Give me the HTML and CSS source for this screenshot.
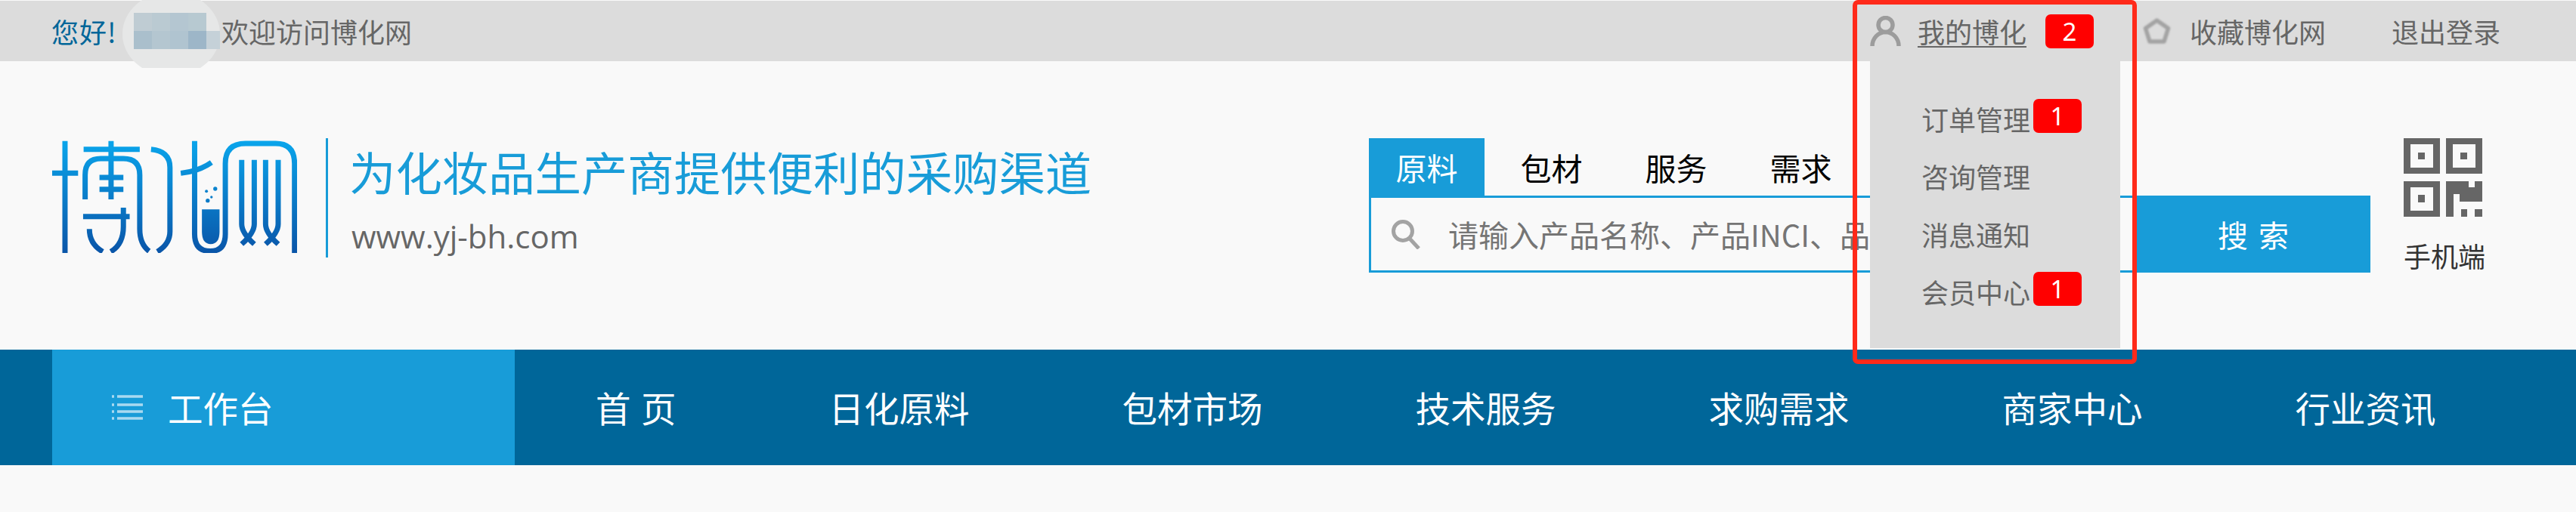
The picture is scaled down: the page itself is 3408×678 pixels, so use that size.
FILE: index.html
```html
<!DOCTYPE html>
<html lang="zh-CN">
<head>
<meta charset="utf-8">
<title>博化网</title>
<link rel="stylesheet" href="styles.css">
</head>
<body>
<div class="page">
  <header class="topbar">
    <div class="welcome">
      <span class="greet">您好!</span>
      <span class="name">
        <span class="haze"></span>
        <span class="mosaic"><i></i><i></i><i></i><i></i><i></i><i></i><i></i><i></i><i></i><i></i></span>
      </span>
      <span>欢迎访问博化网</span>
    </div>
    <div class="account">
      <div class="mine">
        <svg class="icon-user" viewBox="0 0 41 40" aria-hidden="true">
          <circle cx="20.5" cy="12" r="9.500"/>
          <path d="M3 40a17.500 18.500 0 0 1 35 0"/>
        </svg>
        <a class="mine-link">我的博化</a>
        <span class="badge badge-top">2</span>
        <ul class="dropdown">
          <li>订单管理<span class="badge">1</span></li>
          <li>咨询管理</li>
          <li>消息通知</li>
          <li>会员中心<span class="badge">1</span></li>
        </ul>
      </div>
      <svg class="icon-star" viewBox="0 0 37 36" aria-hidden="true">
        <path d="M18.500 4 33.500 14.500 28 32H9L3.500 14.500Z"/>
      </svg>
      <span class="fav">收藏博化网</span>
      <span class="logout">退出登录</span>
    </div>
  </header>

  <section class="masthead">
    <div class="brand">
      <svg class="logo" viewBox="57 75 973 450" aria-label="博化" role="img">
        <defs>
          <linearGradient id="lg" gradientUnits="userSpaceOnUse" x1="0" y1="75" x2="0" y2="525">
            <stop offset="0" stop-color="#0aa6ec"/>
            <stop offset="1" stop-color="#0a55a8"/>
          </linearGradient>
        </defs>
        <g class="logo-lines">
          <path d="M108 80V525"/>
          <path d="M57 208H160"/>
          <path d="M182 113H405"/>
          <path d="M291 80V312"/>
          <path d="M188 312V215Q188 150 250 150H340Q405 150 405 215V430Q405 490 442 518"/>
          <path d="M245 225H340M245 272H340"/>
          <path d="M180 380H365"/>
          <path d="M340 345V420Q340 490 290 520"/>
          <path d="M205 430Q205 490 258 520"/>
          <path d="M450 113Q525 120 525 185V440Q525 490 475 520"/>
          <path d="M623 80V450Q623 518 685 518Q745 518 745 450V170Q745 90 825 90H945Q1020 90 1020 170V525"/>
          <path d="M568 208Q640 200 690 165"/>
          <path d="M810 155V410Q810 445 860 490M860 155V410Q860 445 810 490"/>
          <path d="M905 155V410Q905 445 955 490M955 155V410Q955 445 905 490"/>
        </g>
        <g class="logo-fill">
          <path d="M652 352H722V440Q722 490 687 490Q652 490 652 440Z"/>
          <circle cx="705" cy="270" r="8"/>
          <circle cx="670" cy="280" r="6"/>
          <circle cx="690" cy="303" r="5"/>
          <circle cx="675" cy="317" r="8"/>
        </g>
      </svg>
      <div class="brand-text">
        <div class="slogan">为化妆品生产商提供便利的采购渠道</div>
        <div class="url">www.yj-bh.com</div>
      </div>
    </div>
    <div class="search">
      <div class="tabs">
        <span class="tab tab-active">原料</span>
        <span class="tab">包材</span>
        <span class="tab">服务</span>
        <span class="tab">需求</span>
      </div>
      <div class="search-box">
        <div class="field">
          <svg class="icon-search" viewBox="0 0 42 40" aria-hidden="true">
            <circle cx="17" cy="16" r="12.500"/>
            <path d="M26 26 38 39"/>
          </svg>
          <span class="placeholder">请输入产品名称、产品INCI、品</span>
        </div>
        <button class="submit">搜 索</button>
      </div>
    </div>
    <div class="mobile">
      <svg class="icon-qr" viewBox="0 0 105 104" aria-hidden="true">
        <path fill-rule="evenodd" d="M0 0H48V47H0ZM9 8V39H39V8ZM19 19H28V28H19Z"/>
        <path fill-rule="evenodd" d="M56 0H104V47H56ZM65 8V39H95V8ZM75 19H84V28H75Z"/>
        <path fill-rule="evenodd" d="M0 57H48V104H0ZM9 65V96H39V65ZM19 75H28V85H19Z"/>
        <path d="M56 57H86V65H94V57H104V84H74V74H66V104H56Z"/>
        <path d="M76 94H84V104H76ZM94 94H104V104H94Z"/>
      </svg>
      <span>手机端</span>
    </div>
  </section>

  <nav class="nav">
    <div class="workbench">
      <svg class="icon-menu" viewBox="0 0 41 33" aria-hidden="true">
        <path d="M0 2H3M7 2H41M0 13H3M7 13H41M0 22H3M7 22H41M0 31H3M7 31H41"/>
      </svg>
      <span>工作台</span>
    </div>
    <ul class="nav-items">
      <li class="nav-home">首 页</li>
      <li>日化原料</li>
      <li>包材市场</li>
      <li>技术服务</li>
      <li>求购需求</li>
      <li>商家中心</li>
      <li>行业资讯</li>
    </ul>
  </nav>

  <div class="annotation"></div>
</div>
</body>
</html>
```
FILE: styles.css
```css
* { box-sizing: border-box; }

html, body {
  margin: 0;
  height: 678px;
  overflow: hidden;
}

body {
  background: #f9f9f9;
  color: #666;
  font-family: "Noto Sans CJK SC", "Noto Sans", sans-serif;
}

ul { margin: 0; padding: 0; list-style: none; }

.page {
  position: relative;
  padding-top: 1px;
  height: 678px;
}

/* top bar */
.topbar {
  display: flex;
  align-items: center;
  height: 80px;
  padding: 0 100px 0 68px;
  background: #dcdcdc;
  font-size: 36px;
  line-height: 1;
}

.welcome { display: flex; align-items: center; }

.greet { width: 94px; color: #006699; letter-spacing: 1px; white-space: nowrap; }

.name {
  position: relative;
  width: 131px;
  height: 80px;
}

.haze {
  position: absolute;
  left: 0;
  top: -12px;
  width: 129px;
  height: 112px;
  background: #e6e7e7;
  border-radius: 50%;
  clip-path: inset(11px 0 11px 0);
  z-index: 3;
}

.mosaic {
  position: absolute;
  left: 15px;
  top: 16px;
  display: grid;
  grid-template-columns: repeat(4, 24px) 18px;
  grid-auto-rows: 24px;
  z-index: 4;
}

.mosaic i:nth-child(1) { background: #bfccd3; }
.mosaic i:nth-child(2) { background: #bacad2; }
.mosaic i:nth-child(3) { background: #b4c6d1; }
.mosaic i:nth-child(4) { background: #b7c9d1; }
.mosaic i:nth-child(6) { background: #aabfcc; }
.mosaic i:nth-child(7) { background: #b4c6d0; }
.mosaic i:nth-child(8) { background: #b0c4d0; }
.mosaic i:nth-child(9) { background: #9db6c8; }
.mosaic i:nth-child(10) { background: #c5d1d8; }

.account {
  display: flex;
  align-items: center;
  margin-left: auto;
}

.mine {
  position: relative;
  display: flex;
  align-items: center;
  height: 80px;
}

.icon-user {
  width: 41px;
  height: 40px;
  margin: 0 22px 1px 0;
  fill: none;
  stroke: #9c9c9c;
  stroke-width: 5.5;
  filter: blur(.6px);
}

.mine-link {
  color: #666;
  text-decoration: underline;
  text-underline-offset: 4px;
  text-decoration-thickness: 2px;
}

.badge {
  display: flex;
  align-items: center;
  justify-content: center;
  width: 64px;
  height: 45px;
  margin: 0 0 7px 4px;
  border-radius: 7px;
  background: #f00;
  color: #fff;
  font-family: "Noto Sans", sans-serif;
  font-size: 33px;
  line-height: 1;
}

.badge-top { margin: 0 0 -8px 25px; transform: translateY(-4px); }

.dropdown {
  position: absolute;
  left: 0;
  top: 80px;
  width: 331px;
  height: 380px;
  padding: 38px 0 0 68px;
  background: #dcdcdc;
  z-index: 5;
}

.dropdown li {
  display: flex;
  align-items: center;
  height: 76.3px;
  white-space: nowrap;
}

.icon-star {
  width: 37px;
  height: 36px;
  margin: 0 25px 0 65px;
  fill: none;
  stroke: #a3a3a3;
  stroke-width: 5.5;
  stroke-linejoin: round;
  filter: blur(.8px);
}

.fav { white-space: nowrap; }

.logout { margin-left: 87px; white-space: nowrap; }

/* masthead */
.masthead {
  display: flex;
  align-items: flex-start;
  height: 382px;
  padding: 102px 0 0 69px;
}

.brand {
  display: flex;
  flex: 0 0 1742px;
}

.logo {
  flex: none;
  width: 324px;
  height: 150px;
  margin: 2px 38px 0 0;
  filter: blur(.5px);
}

.logo-lines {
  fill: none;
  stroke: url(#lg);
  stroke-width: 21;
}

.logo-fill { fill: url(#lg); }

.brand-text {
  height: 158px;
  padding-left: 28px;
  border-left: 3px solid #189cd8;
}

.slogan {
  color: #189cd8;
  font-size: 61.4px;
  line-height: 88px;
  white-space: nowrap;
}

.url {
  margin: 4px 0 0 3px;
  font-family: "Open Sans", "Noto Sans", sans-serif;
  font-size: 42px;
  line-height: 76px;
}

.search { flex: 0 0 1325px; }

.tabs {
  display: flex;
  gap: 12px;
  height: 76px;
}

.tab {
  display: flex;
  align-items: center;
  justify-content: center;
  width: 153px;
  color: #000;
  font-size: 41px;
  line-height: 1;
}

.tab-active { background: #189cd8; color: #fff; }

.search-box {
  display: flex;
  height: 102px;
}

.field {
  flex: 1;
  min-width: 0;
  display: flex;
  align-items: center;
  padding-left: 25px;
  border: 3px solid #189cd8;
  border-right: 0;
  overflow: hidden;
}

.icon-search {
  flex: none;
  width: 42px;
  height: 40px;
  margin-right: 35px;
  fill: none;
  stroke: #a3a3a3;
  stroke-width: 5;
  filter: blur(.6px);
}

.placeholder {
  color: #757575;
  font-size: 40px;
  line-height: 1;
  white-space: nowrap;
}

.submit {
  flex: 0 0 310px;
  border: 0;
  padding: 0;
  background: #189cd8;
  color: #fff;
  font: inherit;
  font-size: 40px;
  word-spacing: 5px;
  line-height: 1;
}

.mobile {
  display: flex;
  flex-direction: column;
  align-items: flex-start;
  margin-left: 44px;
  color: #333;
  font-size: 36px;
  line-height: 1;
}

.icon-qr {
  width: 105px;
  height: 104px;
  margin-bottom: 33px;
  fill: #666;
}

/* nav */
.nav {
  display: flex;
  height: 153px;
  padding-left: 69px;
  background: #006699;
  color: #fff;
  font-size: 46.5px;
  line-height: 1;
}

.workbench {
  display: flex;
  align-items: center;
  flex: 0 0 612px;
  padding-left: 79px;
  background: #189cd8;
}

.icon-menu {
  width: 41px;
  height: 33px;
  margin-right: 33px;
  fill: none;
  stroke: #a9d9f0;
  stroke-width: 3.5;
  filter: blur(.5px);
}

.nav-items {
  display: flex;
  align-items: center;
  gap: 202px;
  margin-left: 107px;
  white-space: nowrap;
}

.nav-home { word-spacing: 3px; }

/* red highlight frame drawn over the screenshot */
.annotation {
  position: absolute;
  left: 2451px;
  top: 0;
  width: 376px;
  height: 482px;
  border: 6px solid #ff2a1a;
  border-radius: 7px;
  z-index: 6;
}
```
